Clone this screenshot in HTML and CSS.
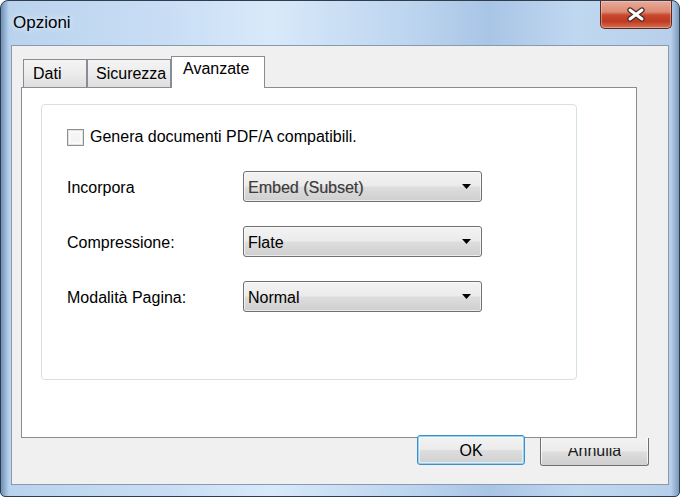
FILE: index.html
```html
<!DOCTYPE html>
<html lang="it">
<head>
<meta charset="utf-8">
<title>Opzioni</title>
<link rel="stylesheet" href="styles.css">
</head>
<body>
<div class="window">
  <div class="titlebar">
    <div class="title">Opzioni</div>
    <div class="close">
      <svg width="20" height="15" viewBox="0 0 20 15">
        <path d="M4 3 L16 12 M16 3 L4 12" stroke="#4a2a26" stroke-width="5.4" stroke-linecap="round" fill="none"/>
        <path d="M4 3 L16 12 M16 3 L4 12" stroke="#ffffff" stroke-width="3" stroke-linecap="round" fill="none"/>
      </svg>
    </div>
  </div>
  <div class="client">
    <div class="tabs">
      <div class="tab tab-dati">Dati</div>
      <div class="tab tab-sic">Sicurezza</div>
      <div class="tab tab-sel">Avanzate</div>
    </div>
    <div class="panel">
      <div class="group">
        <div class="check-row">
          <span class="checkbox"></span>
          <span>Genera documenti PDF/A compatibili.</span>
        </div>
        <div class="field">
          <span class="label">Incorpora</span>
          <div class="select"><span class="value dim">Embed (Subset)</span><svg class="arrow" width="9" height="5" viewBox="0 0 9 5"><path d="M0 0 H9 L4.5 5 Z" fill="#000"/></svg></div>
        </div>
        <div class="field">
          <span class="label">Compressione:</span>
          <div class="select"><span class="value">Flate</span><svg class="arrow" width="9" height="5" viewBox="0 0 9 5"><path d="M0 0 H9 L4.5 5 Z" fill="#000"/></svg></div>
        </div>
        <div class="field">
          <span class="label">Modalità Pagina:</span>
          <div class="select"><span class="value">Normal</span><svg class="arrow" width="9" height="5" viewBox="0 0 9 5"><path d="M0 0 H9 L4.5 5 Z" fill="#000"/></svg></div>
        </div>
      </div>
    </div>
    <div class="buttons">
      <div class="btn btn-ok">OK</div>
      <div class="btn btn-cancel"><div class="clip"><span>Annulla</span></div></div>
    </div>
  </div>
</div>
</body>
</html>
```
FILE: styles.css
```css
* { box-sizing: border-box; }
html, body { margin: 0; padding: 0; }
body {
  width: 680px;
  height: 497px;
  background: #ffffff;
  font-family: "Liberation Sans", Arial, sans-serif;
  font-size: 16px;
  color: #000;
  overflow: hidden;
}
.window {
  width: 680px;
  height: 497px;
  border: 1px solid #2f3d4d;
  border-radius: 8px 8px 5px 5px;
  background:
    linear-gradient(to right, rgba(60,100,145,0.6) 0px, rgba(70,110,150,0) 8px, rgba(70,110,150,0) 670px, rgba(60,100,145,0.5) 678px),
    linear-gradient(to right, #b9d2ed 0%, #c9def5 25%, #d8e9fa 40%, #bdd5ef 60%, #a9c5e6 72%, #c0d7f0 85%, #b7cfea 100%);
  display: flex;
  flex-direction: column;
  overflow: hidden;
}
.titlebar {
  height: 44px;
  display: flex;
  justify-content: space-between;
  align-items: flex-start;
  padding-left: 12px;
  padding-right: 7px;
}
.title {
  font-size: 17px;
  line-height: 20px;
  padding-top: 12px;
  color: #000;
  text-shadow: 0 0 6px rgba(255,255,255,0.9);
}
.close {
  width: 72px;
  height: 28px;
  border: 1px solid #5a2a22;
  border-top: none;
  border-radius: 0 0 5px 5px;
  background: linear-gradient(#e9aa99 0%, #dc8a74 40%, #c8492f 52%, #bf3a22 75%, #d7704f 100%);
  box-shadow: inset 0 0 0 1px rgba(255,210,200,0.45);
  display: flex;
  align-items: center;
  justify-content: center;
}
.client {
  height: 440px;
  margin: 0 10px 0 10px;
  border: 1px solid #8a9aad;
  background: #f0f0f0;
  padding: 10px 0 0 9px;
}
.tabs {
  height: 31px;
  display: flex;
  align-items: flex-end;
  padding-left: 2px;
}
.tab {
  height: 28px;
  border: 1px solid #898c95;
  border-bottom: none;
  background: linear-gradient(#f4f4f4 0%, #ececec 50%, #dedede 100%);
  line-height: 18px;
  padding: 5px 0 0 9px;
  font-size: 16px;
  white-space: nowrap;
}
.tab-dati { width: 64px; }
.tab-sic { width: 84px; padding-left: 8px; }
.tab-sel {
  width: 94px;
  height: 32px;
  margin-bottom: -1px;
  background: #ffffff;
  padding: 3px 0 0 11px;
  position: relative;
  z-index: 2;
}
.panel {
  width: 616px;
  height: 351px;
  background: #ffffff;
  border: 1px solid #898c95;
  padding: 16px 0 0 19px;
}
.group {
  width: 536px;
  height: 276px;
  border: 1px solid #d5dfe5;
  border-radius: 4px;
  padding: 23px 0 0 25px;
}
.check-row {
  height: 18px;
  display: flex;
  align-items: center;
  gap: 6px;
  line-height: 18px;
}
.checkbox {
  width: 17px;
  height: 17px;
  border: 1px solid #8e8f8f;
  background: #f4f4f4;
  box-shadow: inset 0 0 0 1px #e2e2e2, inset 0 0 0 3px #f9f9f9;
}
.field {
  display: flex;
  align-items: center;
  height: 31px;
  margin-top: 24px;
}
.check-row + .field { margin-top: 25px; }
.label {
  width: 176px;
  line-height: 18px;
  padding-top: 2px;
}
.select {
  width: 239px;
  height: 31px;
  border: 1px solid #707070;
  border-radius: 3px;
  background: linear-gradient(#f3f3f3 0%, #ebebeb 48%, #dddddd 52%, #cfcfcf 100%);
  box-shadow: inset 0 0 0 1px rgba(255,255,255,0.6);
  display: flex;
  align-items: center;
  justify-content: space-between;
  padding: 0 10px 0 4px;
}
.value {
  line-height: 18px;
  padding-top: 2px;
}
.value.dim {
  color: #3c3c3c;
  text-shadow: 0.5px 0 0 rgba(120,120,120,0.6);
}
.arrow { display: block; }
.buttons {
  display: flex;
  align-items: flex-start;
  gap: 15px;
  padding-left: 396px;
  margin-top: -3px;
  position: relative;
  z-index: 3;
}
.btn {
  height: 30px;
  border-radius: 3px;
  background: linear-gradient(#f3f3f3 0%, #ebebeb 48%, #dddddd 52%, #cfcfcf 100%);
  display: flex;
  justify-content: center;
  font-size: 16px;
}
.btn-ok {
  width: 108px;
  border: 1px solid #3c8fc7;
  box-shadow: inset 0 0 0 1px #8fd3f5, inset 0 0 0 2px rgba(255,255,255,0.5);
  align-items: center;
  line-height: 18px;
  padding-top: 1px;
}
.btn-cancel {
  width: 109px;
  height: 28px;
  margin-top: 3px;
  border: 1px solid #707070;
  border-top: none;
  border-radius: 0 0 3px 3px;
  box-shadow: inset 1px 0 0 rgba(255,255,255,0.7), inset -1px 0 0 rgba(255,255,255,0.7);
}
.clip {
  margin-top: 10px;
  height: 9px;
  overflow: hidden;
}
.clip span {
  display: block;
  line-height: 18px;
  margin-top: -6px;
  color: #1a1a1a;
}
```
